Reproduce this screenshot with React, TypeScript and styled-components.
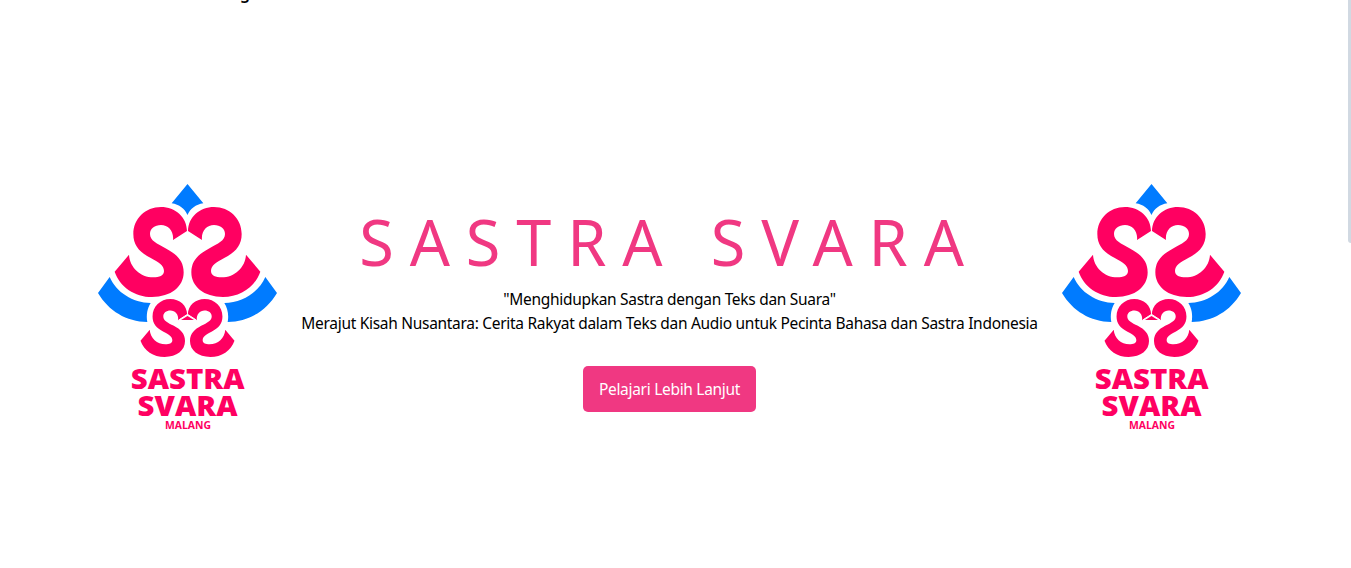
import React from 'react';
import styled, { createGlobalStyle } from 'styled-components';

const GlobalStyle = createGlobalStyle`
  * { box-sizing: border-box; }
  html, body { margin: 0; height: 568px; overflow: hidden; background: #fff; }
  body { font-family: 'Segoe UI', 'Noto Sans', sans-serif; color: #000; }
`;

const Page = styled.main`
  position: relative;
  height: 568px;
  overflow: hidden;
`;

const PreviousLine = styled.div`
  position: absolute;
  top: -19px;
  left: 240px;
  font-size: 16px;
  font-weight: 600;
  line-height: 24px;
`;

const ScrollThumb = styled.div`
  position: absolute;
  top: -8px;
  right: 0;
  width: 3px;
  height: 251px;
  border-radius: 0 0 0 3px;
  background: #d1d9e2;
`;

const Hero = styled.section`
  display: flex;
  justify-content: center;
  align-items: flex-start;
  padding: 175px 7px 0 0;
`;

const Emblem = styled.svg`
  flex: none;
  width: 200px;
  height: 260px;
`;

const Copy = styled.div`
  flex: none;
  width: 764px;
  padding: 20px 5px 0 0;
  display: flex;
  flex-direction: column;
  align-items: center;
`;

const Title = styled.h1`
  margin: 0;
  height: 92px;
  color: #f03882;
  font-size: 63px;
  font-weight: 400;
  line-height: 94px;
  letter-spacing: 15.9px;
  white-space: nowrap;
`;

const Line = styled.p`
  margin: 0;
  font-size: 15.5px;
  line-height: 24px;
  letter-spacing: -0.3px;
  white-space: nowrap;
`;

const Action = styled.button`
  width: 173px;
  height: 46px;
  margin-top: 31px;
  padding: 0;
  border: 0;
  border-radius: 5px;
  background: #f03882;
  color: #fff;
  font-family: inherit;
  font-size: 15.5px;
  letter-spacing: -0.3px;
  white-space: nowrap;
`;

const curl =
  'M291 168C290 126 256 96 213 96C166 96 130 131 130 177C130 211 148 231 181 248C207 262 222 270 222 288C222 302 208 307 190 307C151 307 119 277 117 239L74 290C90 336 134 366 186 366C243 366 281 335 281 292C281 257 260 238 229 221C200 205 180 197 180 177C180 161 194 150 213 150C235 150 252 168 249 195Z';

function Half() {
  return (
    <>
      <path fill="#ff0061" d={curl} />
      <path fill="#ff0061" transform="translate(103.8 310) scale(.645)" d={curl} />
      <path
        fill="#007bff"
        d="M59 306L24 354C56 408 109 440 172 441C168 420 172 400 182 384C128 383 79 352 59 306Z"
      />
    </>
  );
}

function Logo() {
  return (
    <Emblem viewBox="0 0 600 780">
      <path fill="#007bff" d="M292.500 27L340 85C317 89 301 101 292.500 120C284 101 268 89 245 85Z" />
      <Half />
      <g transform="translate(585 0) scale(-1 1)">
        <Half />
      </g>
      <path fill="#ff0061" d="M273 435L292.500 423L312 435Z" />
      <path fill="none" stroke="#fff" strokeWidth="3" d="M266 435L292.500 418L319 435" />
      <g fill="#ff0061" fontFamily="Open Sans" fontWeight="800" textAnchor="middle">
        <text x="293" y="642" fontSize="85" textLength="342" lengthAdjust="spacingAndGlyphs">SASTRA</text>
        <text x="292.500" y="722" fontSize="85" textLength="300" lengthAdjust="spacingAndGlyphs">SVARA</text>
        <text x="294" y="761" fontSize="32" fontWeight="700" textLength="138" lengthAdjust="spacingAndGlyphs">MALANG</text>
      </g>
    </Emblem>
  );
}

export default function App() {
  return (
    <Page>
      <GlobalStyle />
      <PreviousLine>g</PreviousLine>
      <Hero>
        <Logo />
        <Copy>
          <Title>SASTRA SVARA</Title>
          <Line>"Menghidupkan Sastra dengan Teks dan Suara"</Line>
          <Line>
            Merajut Kisah Nusantara: Cerita Rakyat dalam Teks dan Audio untuk Pecinta Bahasa dan Sastra Indonesia
          </Line>
          <Action>Pelajari Lebih Lanjut</Action>
        </Copy>
        <Logo />
      </Hero>
      <ScrollThumb />
    </Page>
  );
}
